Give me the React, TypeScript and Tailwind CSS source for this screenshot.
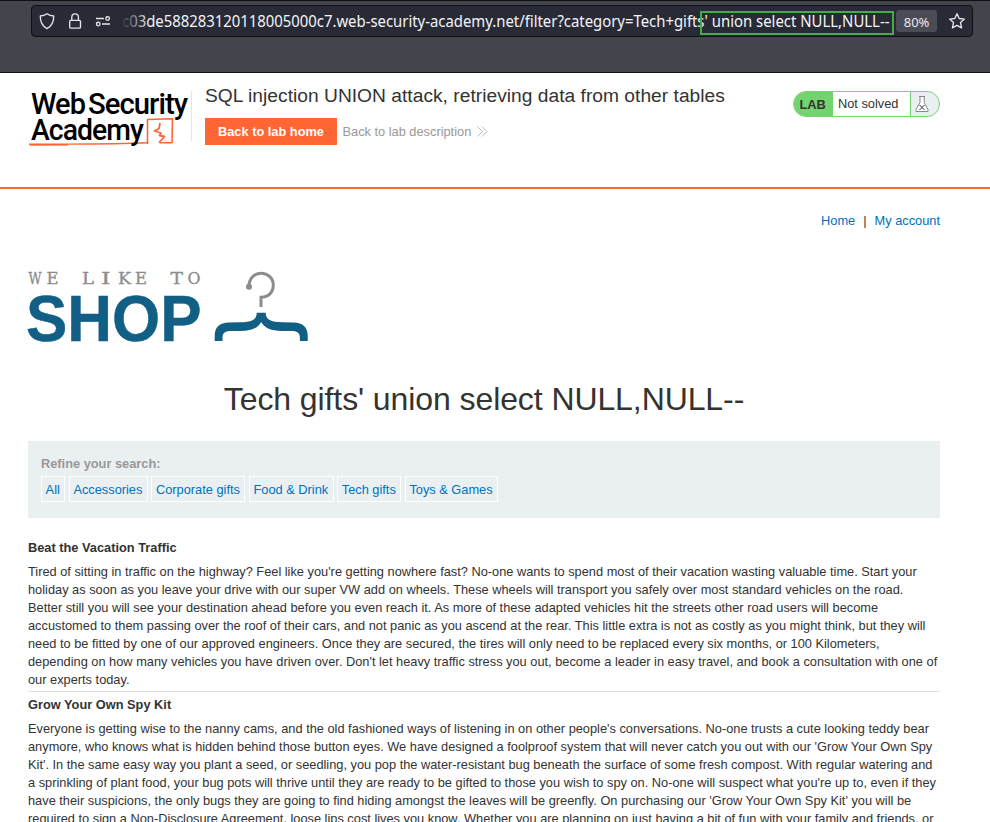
import React from "react";

const categories = ["All", "Accessories", "Corporate gifts", "Food & Drink", "Tech gifts", "Toys & Games"];

const posts = [
  {
    title: "Beat the Vacation Traffic",
    body: "Tired of sitting in traffic on the highway? Feel like you're getting nowhere fast? No-one wants to spend most of their vacation wasting valuable time. Start your holiday as soon as you leave your drive with our super VW add on wheels. These wheels will transport you safely over most standard vehicles on the road. Better still you will see your destination ahead before you even reach it. As more of these adapted vehicles hit the streets other road users will become accustomed to them passing over the roof of their cars, and not panic as you ascend at the rear. This little extra is not as costly as you might think, but they will need to be fitted by one of our approved engineers. Once they are secured, the tires will only need to be replaced every six months, or 100 Kilometers, depending on how many vehicles you have driven over. Don't let heavy traffic stress you out, become a leader in easy travel, and book a consultation with one of our experts today.",
  },
  {
    title: "Grow Your Own Spy Kit",
    body: "Everyone is getting wise to the nanny cams, and the old fashioned ways of listening in on other people's conversations. No-one trusts a cute looking teddy bear anymore, who knows what is hidden behind those button eyes. We have designed a foolproof system that will never catch you out with our 'Grow Your Own Spy Kit'. In the same easy way you plant a seed, or seedling, you pop the water-resistant bug beneath the surface of some fresh compost. With regular watering and a sprinkling of plant food, your bug pots will thrive until they are ready to be gifted to those you wish to spy on. No-one will suspect what you're up to, even if they have their suspicions, the only bugs they are going to find hiding amongst the leaves will be greenfly. On purchasing our 'Grow Your Own Spy Kit' you will be required to sign a Non-Disclosure Agreement, loose lips cost lives you know. Whether you are planning on just having a bit of fun with your family and friends, or",
  },
];

function BrowserBar() {
  return (
    <div className="h-[73px] border-y border-[#0f1014] bg-[#43454d] pl-[31px] pt-1">
      <div className="relative flex h-8 w-[942px] items-center rounded-[4px] border border-[#0f1014] bg-[#282a36] text-[#fbfbfe]">
        <svg width="90" height="30" viewBox="0 0 90 30" fill="none" stroke="#e4e4e8" strokeWidth="1.35" className="shrink-0">
          <path d="M15 7.7c2 1.5 4.2 2.2 6.700 2.300.2 5.300-1.600 9.800-6.700 12.600-5.100-2.800-6.900-7.300-6.700-12.600 2.500-.1 4.700-.8 6.700-2.300z" strokeLinejoin="round" />
          <rect x="37.700" y="14.300" width="10.800" height="7.800" rx="1.200" />
          <path d="M39.800 14v-2.800a3.300 3.300 0 0 1 6.600 0V14" />
          <path d="M64 12.500h8M70 18h8" />
          <circle cx="75.600" cy="12.500" r="1.800" />
          <circle cx="66.200" cy="18" r="1.800" />
        </svg>
        <svg width="769" height="28" className="block shrink-0 font-['Noto_Sans'] text-[16px]" fill="#f4f4f8">
          <defs>
            <linearGradient id="fade" gradientUnits="userSpaceOnUse" x1="0" y1="0" x2="28" y2="0">
              <stop offset="0" stopColor="#f4f4f8" stopOpacity="0.05" />
              <stop offset="1" stopColor="#f4f4f8" />
            </linearGradient>
          </defs>
          <text x="0" y="20" fill="url(#fade)" textLength="582.500" lengthAdjust="spacingAndGlyphs">c03de588283120118005000c7.web-security-academy.net/filter?category=Tech+gifts</text>
          <text x="582.500" y="20" textLength="185" lengthAdjust="spacingAndGlyphs">' union select NULL,NULL--</text>
        </svg>
        <div className="ml-[5px] flex h-[22px] w-[41px] items-center justify-center rounded-[3px] bg-[#4a4c56] pt-px font-['Noto_Sans'] text-[13px] tracking-[-0.1px] text-[#e8e8ec]">80%</div>
        <svg width="18" height="18" viewBox="0 0 18 18" className="ml-[11px]" fill="none" stroke="#e4e4e8" strokeWidth="1.35" strokeLinejoin="round">
          <path d="M9 1.7l2.2 4.800 5.200.6-3.900 3.500 1.100 5.300L9 13.300l-4.600 2.600 1.100-5.300-3.900-3.500 5.200-.6z" />
        </svg>
        <div className="absolute left-[668px] top-[5px] h-6 w-[194px] border-2 border-[#46ab4a]" />
      </div>
    </div>
  );
}

function AcademyLogo() {
  return (
    <svg width="164" height="60" viewBox="28 90 164 60" className="shrink-0 overflow-visible font-['Roboto'] text-[30px] font-medium tracking-[-1px]">
      <text x="31" y="113.700" textLength="54" lengthAdjust="spacingAndGlyphs">Web</text>
      <text x="88" y="113.700" textLength="99" lengthAdjust="spacingAndGlyphs">Security</text>
      <g fill="none" stroke="#ff6633" strokeLinejoin="round">
        <path d="M29 144.300c38-.5 78 .3 118-1.500M30 145l38-.3" strokeWidth="1.4" />
        <path d="M147.500 144V119.500l25-.7-.5 24-12.500-.1" strokeWidth="1.600" />
        <path d="M160 123l-1 5.500-4.500 2.500 6.500 2-1.500 2.500 5 1-5.500 6" strokeWidth="1.800" />
      </g>
      <text x="31" y="140" textLength="112" lengthAdjust="spacingAndGlyphs">Academy</text>
      <path d="M191.500 91v50" stroke="#e5e5e5" />
    </svg>
  );
}

const tagline: [string, number, number][] = [
  ["W", 28.5, 13], ["E", 46.5, 12], ["L", 82, 12], ["I", 101, 9.5], ["K", 118, 13],
  ["E", 135, 12], ["T", 170.5, 12.5], ["O", 187.5, 13],
];

function ShopLogo() {
  return (
    <svg width="284" height="76" viewBox="26 269 284 76" className="-ml-[2px] block overflow-visible">
      <g className="font-['DejaVu_Serif'] text-[17px]" fill="#8c8c8c" stroke="#8c8c8c" strokeWidth=".35">
        {tagline.map(([letter, x, width]) => (
          <text key={x} x={x} y="284.300" textLength={width} lengthAdjust="spacingAndGlyphs">{letter}</text>
        ))}
      </g>
      <text x="26" y="341" textLength="175.500" lengthAdjust="spacingAndGlyphs" fill="#115f85" stroke="#115f85" strokeWidth=".5" className="font-['Liberation_Sans'] text-[64.5px] font-bold">SHOP</text>
      <path d="M249 286.500c0-8 5-13.200 12-13.200 7 0 12.300 5.100 12.300 11.700 0 7.500-5 12.200-12.300 12.200V307" fill="none" stroke="#8c8c8c" strokeWidth="3" />
      <circle cx="249" cy="286.700" r="3" fill="#8c8c8c" />
      <path d="M214.700 341v-5c0-9 5-13.200 14-13.400l11-.3c12-.3 17-2.300 17-9.500h9c0 7.200 5 9.200 17 9.500l11 .3c9 .2 14 4.400 14 13.400v5h-7.800v-3c0-5-2.500-7-8-7l-10-.1c-11-.3-17-2.600-20.700-9-3.700 6.400-9.700 8.700-20.700 9l-10 .1c-5.500 0-8 2-8 7v3z" fill="#115f85" />
    </svg>
  );
}

function LabStatus() {
  return (
    <div className="ml-auto mt-[18px] flex h-[26px] w-[147px] shrink-0 overflow-hidden rounded-full border border-[#72d46f] bg-[#eaeff2]">
      <strong className="w-[39px] bg-[#72d46f] pl-[5.5px] leading-[26px]">LAB</strong>
      <span className="w-[78px] border-r border-[#72d46f] bg-white pl-[5px] leading-[24px]">Not solved</span>
      <svg width="14" height="18" viewBox="0 0 14 18" className="ml-[4px] mt-[4px]" fill="#fff" stroke="#888" strokeWidth="1">
        <path d="M5 1v5.500L1 13.500v2h12v-2L9.200 6.500V1" />
        <path d="M4 .5h6" />
        <path d="M4.500 9l5 5m0-5l-5 5" stroke="#333" />
      </svg>
    </div>
  );
}

export default function App() {
  return (
    <div className="h-[822px] w-[990px] overflow-hidden bg-white font-['Liberation_Sans',Arial,sans-serif] text-[12.8px] leading-[18px] text-[#333332]">
      <BrowserBar />
      <header className="flex h-[116px] border-b-2 border-[#ff6633] pl-7 pr-[50px]">
        <div className="pt-[17px]"><AcademyLogo /></div>
        <div className="ml-[13px] pt-[11px]">
          <h2 className="whitespace-nowrap text-[19.2px] leading-6 tracking-[0.02px]">SQL injection UNION attack, retrieving data from other tables</h2>
          <div className="mt-[10px] flex items-center">
            <a className="flex h-[27px] w-[132px] items-center justify-center bg-[#ff6633] font-bold text-white">Back to lab home</a>
            <a className="ml-[5.5px] text-[#999]">Back to lab description</a>
            <svg width="11" height="11" viewBox="0 0 11 11" className="ml-[6px]" fill="none" stroke="#aaa" strokeWidth=".8">
              <path d="M.5 .5l5 5-5 5M5 .5l5 5-5 5" />
            </svg>
          </div>
        </div>
        <LabStatus />
      </header>
      <main className="mx-7 w-[912px]">
        <nav className="flex justify-end pt-[23px] text-[#0071ba]">
          <a>Home</a><span className="mx-2 text-[#333332]">|</span><a>My account</a>
        </nav>
        <div className="pt-[39px]"><ShopLogo /></div>
        <h1 className="mt-[36px] text-center text-[32px] leading-9 tracking-[-0.09px]">Tech gifts' union select NULL,NULL--</h1>
        <section className="mt-6 h-[77px] bg-[#eaeff2] px-[13px] pt-[14px]">
          <div className="font-bold text-[#999]">Refine your search:</div>
          <div className="mt-[3px] flex gap-[3.6px]">
            {categories.map((category) => (
              <a key={category} className="h-[26px] whitespace-nowrap border border-white pl-[3.6px] pr-[4.4px] leading-[25px] text-[#0071ba]">{category}</a>
            ))}
          </div>
        </section>
        <section className="pt-[21px]">
          {posts.map((post) => (
            <article key={post.title} className="mb-1 border-b border-[#ddd] pb-[2px]">
              <h3 className="font-bold">{post.title}</h3>
              <p className="mt-[6px]">{post.body}</p>
            </article>
          ))}
        </section>
      </main>
    </div>
  );
}
